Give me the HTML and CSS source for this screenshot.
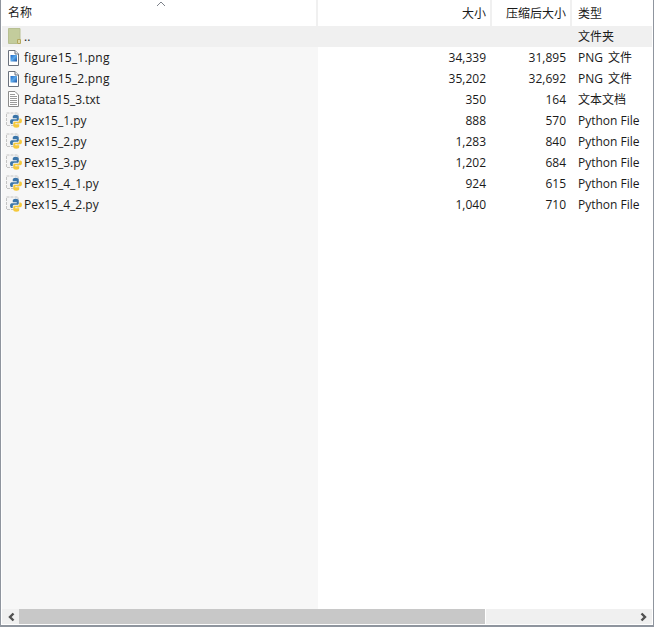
FILE: index.html
```html
<!DOCTYPE html>
<html lang="zh-CN">
<head>
<meta charset="utf-8">
<title>文件列表</title>
<link rel="stylesheet" href="styles.css">
</head>
<body>
<svg class="defs" width="0" height="0" aria-hidden="true">
  <defs>
    <linearGradient id="blue" x1="0" y1="0" x2="1" y2="1">
      <stop offset="0" stop-color="#1f66c4"/>
      <stop offset=".5" stop-color="#5aa8ea"/>
      <stop offset="1" stop-color="#1c4f9f"/>
    </linearGradient>
    <symbol id="i-folder" viewBox="0 0 16 17">
      <path d="M2.500 .5H14V11L11 15.500H2.500Z" fill="#c3cc9c" stroke="#b7bf92"/>
      <path d="M11.500 15.500V11.500H14.500V15.500Z" fill="#dcd8a8" stroke="#b3a95f"/>
    </symbol>
    <symbol id="i-png" viewBox="0 0 16 17">
      <path d="M2.500 1.500H9L12.500 5V16.500H2.500Z" fill="#fff" stroke="#6a717c"/>
      <path d="M9 1.500V5H12.500" fill="#e8edf5" stroke="#6a717c"/>
      <rect x="4.500" y="6" width="6.500" height="6.500" fill="url(#blue)"/>
    </symbol>
    <symbol id="i-txt" viewBox="0 0 16 17">
      <path d="M2.500 .5H9L12.500 4V15.500H2.500Z" fill="#fff" stroke="#8b8b8b"/>
      <path d="M4 3.500H9M4 5.500H11M4 7.500H11M4 9.500H11M4 11.500H11M4 13.500H11" stroke="#9a9a9a"/>
    </symbol>
    <symbol id="i-py" viewBox="0 0 16 17">
      <path d="M.5 1H12V13.500H.5Z" fill="#f4f4f4" stroke="#c4c4c4" stroke-dasharray="3 1"/>
      <g transform="translate(1.750 -.25)">
        <path d="M8 3C5.500 3 5 4 5 5V6.500H9V7.500H4C2.800 7.500 2.300 8.600 2.300 10C2.300 11.500 3 12.300 4 12.300H5V10.500C5 9.500 5.800 9 6.800 9H9.500C10.500 9 11 8.300 11 7.500V5C11 4 10 3 8 3Z" fill="#3a74a8"/>
        <path d="M8.500 16C11 16 11.500 15 11.500 14V12.500H7.500V11.500H12.500C13.700 11.500 14.200 10.400 14.200 9C14.200 7.500 13.500 6.700 12.500 6.700H11.500V8.500C11.500 9.500 10.700 10 9.700 10H7C6 10 5.500 10.700 5.500 11.500V14C5.500 15 6.500 16 8.500 16Z" fill="#f5c93c"/>
      </g>
    </symbol>
  </defs>
</svg>
<main class="window">
  <div class="content">
    <div class="row header">
      <div class="cell name">名称<svg class="sort" width="10" height="6" viewBox="0 0 10 6"><path d="M1 5L5 1L9 5" fill="none" stroke="#7d828a"/></svg></div>
      <div class="cell size">大小</div>
      <div class="cell packed">压缩后大小</div>
      <div class="cell type">类型</div>
    </div>
    <div class="row parent">
      <div class="cell name"><svg class="icon"><use href="#i-folder"/></svg>..</div>
      <div class="cell size"></div>
      <div class="cell packed"></div>
      <div class="cell type">文件夹</div>
    </div>
    <div class="row">
      <div class="cell name spread"><svg class="icon"><use href="#i-png"/></svg>figure15_1.png</div>
      <div class="cell size">34,339</div>
      <div class="cell packed">31,895</div>
      <div class="cell type gap">PNG 文件</div>
    </div>
    <div class="row">
      <div class="cell name spread"><svg class="icon"><use href="#i-png"/></svg>figure15_2.png</div>
      <div class="cell size">35,202</div>
      <div class="cell packed">32,692</div>
      <div class="cell type gap">PNG 文件</div>
    </div>
    <div class="row">
      <div class="cell name"><svg class="icon"><use href="#i-txt"/></svg>Pdata15_3.txt</div>
      <div class="cell size">350</div>
      <div class="cell packed">164</div>
      <div class="cell type">文本文档</div>
    </div>
    <div class="row">
      <div class="cell name"><svg class="icon"><use href="#i-py"/></svg>Pex15_1.py</div>
      <div class="cell size">888</div>
      <div class="cell packed">570</div>
      <div class="cell type">Python File</div>
    </div>
    <div class="row">
      <div class="cell name"><svg class="icon"><use href="#i-py"/></svg>Pex15_2.py</div>
      <div class="cell size">1,283</div>
      <div class="cell packed">840</div>
      <div class="cell type">Python File</div>
    </div>
    <div class="row">
      <div class="cell name"><svg class="icon"><use href="#i-py"/></svg>Pex15_3.py</div>
      <div class="cell size">1,202</div>
      <div class="cell packed">684</div>
      <div class="cell type">Python File</div>
    </div>
    <div class="row">
      <div class="cell name"><svg class="icon"><use href="#i-py"/></svg>Pex15_4_1.py</div>
      <div class="cell size">924</div>
      <div class="cell packed">615</div>
      <div class="cell type">Python File</div>
    </div>
    <div class="row">
      <div class="cell name"><svg class="icon"><use href="#i-py"/></svg>Pex15_4_2.py</div>
      <div class="cell size">1,040</div>
      <div class="cell packed">710</div>
      <div class="cell type">Python File</div>
    </div>
    <div class="name-fill"></div>
  </div>
  <div class="scrollbar">
    <div class="arrow"><svg width="8" height="10" viewBox="0 0 8 10"><path d="M6.500 1.500L3 5L6.500 8.500" fill="none" stroke="#505050" stroke-width="2.400"/></svg></div>
    <div class="track"><div class="thumb"></div></div>
    <div class="arrow"><svg width="8" height="10" viewBox="0 0 8 10"><path d="M1.500 1.500L5 5L1.500 8.500" fill="none" stroke="#505050" stroke-width="2.400"/></svg></div>
  </div>
</main>
</body>
</html>
```
FILE: styles.css
```css
* { box-sizing: border-box; }
html, body { margin: 0; height: 100%; }
body {
  background: #fff;
  font-family: "Open Sans", "Noto Sans CJK SC", sans-serif;
  font-size: 12px;
  color: #1a1a1a;
  overflow: hidden;
}
.defs { position: absolute; }
.window {
  width: 654px;
  height: 627px;
  display: flex;
  flex-direction: column;
  padding: 0 1px 1px;
  border-left: 1px solid #8f959e;
  border-right: 1px solid #8f959e;
  border-bottom: 2px solid #8f959e;
}
.content { flex: 1; display: flex; flex-direction: column; min-height: 0; }
.row {
  display: grid;
  grid-template-columns: 316px 174px 80px 1fr;
  height: 21px;
  flex: none;
  line-height: 21px;
}
.cell { white-space: nowrap; overflow: hidden; }
.row .name { background: #f7f7f7; display: flex; align-items: center; padding-left: 4px; gap: 2px; }
.size, .packed { text-align: right; padding-right: 6px; }
.type { padding-left: 6px; }
.spread { letter-spacing: .2px; }
.gap { word-spacing: 2px; }
.header { height: 26px; line-height: 28px; }
.header .name { background: #fff; padding-left: 6px; position: relative; }
.header .cell { border-right: 2px solid #f0f0f0; height: 26px; }
.header .size, .header .packed { padding-right: 4px; }
.header .type { border-right: 0; }
.parent { line-height: 22px; }
.parent .cell, .parent .name { background: #f0f0f0; }
.sort { position: absolute; left: 154px; top: 1px; }
.icon { width: 16px; height: 17px; flex: none; }
.name-fill { flex: 1; width: 316px; background: #f7f7f7; }
.scrollbar {
  flex: none;
  height: 15px;
  display: flex;
  background: #f0f0f0;
}
.arrow { width: 17px; display: flex; align-items: center; justify-content: center; }
.track { flex: 1; }
.thumb { width: 467px; height: 15px; background: #c8c8c8; border-right: 1px solid #fff; }
```
